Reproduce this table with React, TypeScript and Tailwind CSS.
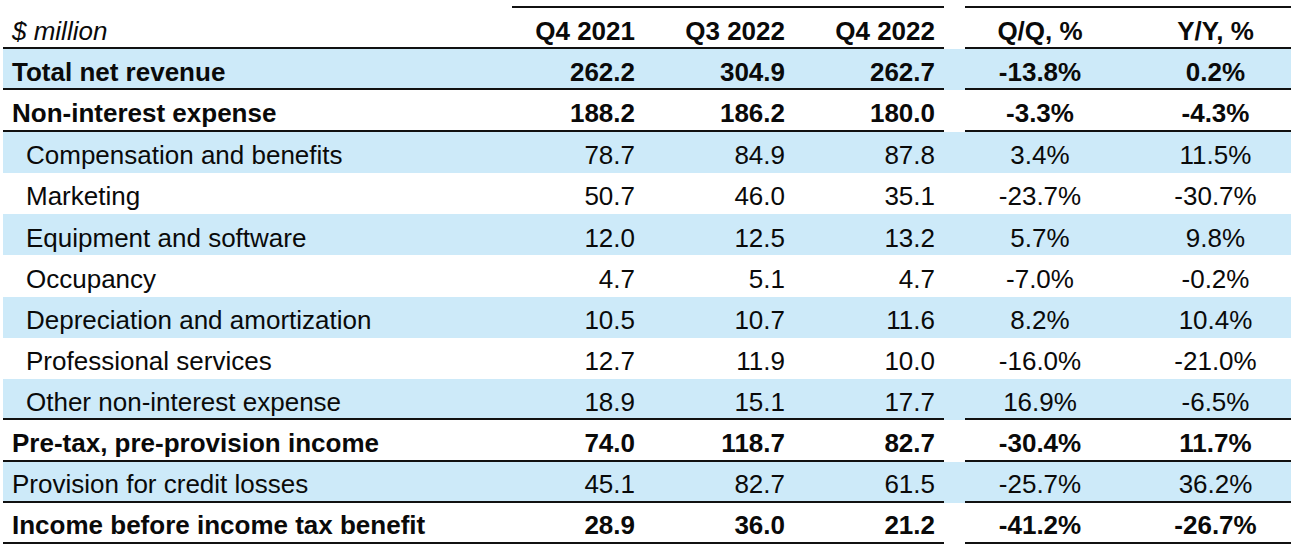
import React from 'react';

interface Row {
  label: string;
  values: string[];
  bold?: boolean;
  indent?: boolean;
  shaded?: boolean;
  line?: boolean;
}

const rows: Row[] = [
  { label: 'Total net revenue', values: ['262.2', '304.9', '262.7', '-13.8%', '0.2%'], bold: true, shaded: true, line: true },
  { label: 'Non-interest expense', values: ['188.2', '186.2', '180.0', '-3.3%', '-4.3%'], bold: true, line: true },
  { label: 'Compensation and benefits', values: ['78.7', '84.9', '87.8', '3.4%', '11.5%'], indent: true, shaded: true },
  { label: 'Marketing', values: ['50.7', '46.0', '35.1', '-23.7%', '-30.7%'], indent: true },
  { label: 'Equipment and software', values: ['12.0', '12.5', '13.2', '5.7%', '9.8%'], indent: true, shaded: true },
  { label: 'Occupancy', values: ['4.7', '5.1', '4.7', '-7.0%', '-0.2%'], indent: true },
  { label: 'Depreciation and amortization', values: ['10.5', '10.7', '11.6', '8.2%', '10.4%'], indent: true, shaded: true },
  { label: 'Professional services', values: ['12.7', '11.9', '10.0', '-16.0%', '-21.0%'], indent: true },
  { label: 'Other non-interest expense', values: ['18.9', '15.1', '17.7', '16.9%', '-6.5%'], indent: true, shaded: true, line: true },
  { label: 'Pre-tax, pre-provision income', values: ['74.0', '118.7', '82.7', '-30.4%', '11.7%'], bold: true, line: true },
  { label: 'Provision for credit losses', values: ['45.1', '82.7', '61.5', '-25.7%', '36.2%'], shaded: true, line: true },
  { label: 'Income before income tax benefit', values: ['28.9', '36.0', '21.2', '-41.2%', '-26.7%'], bold: true, line: true },
];

function DataRow({ row }: { row: Row }) {
  const bg = row.shaded ? 'bg-[#cdeaf9]' : 'bg-white';
  const line = row.line ? 'border-b-2 border-[#111]' : '';
  const weight = row.bold ? 'font-bold' : 'font-normal';
  return (
    <div className={`flex h-[41.25px] ${bg} ${weight}`}>
      <div className={`w-[491px] flex items-center pt-[6px] ${row.indent ? 'pl-[23px]' : 'pl-[9px]'} ${line}`}>
        {row.label}
      </div>
      {row.values.slice(0, 3).map((v, i) => (
        <div key={i} className={`w-[150px] flex items-center justify-end pt-[6px] pr-[9px] ${line}`}>
          {v}
        </div>
      ))}
      <div className="w-[21px]" />
      <div className={`w-[150px] flex items-center justify-center pt-[6px] ${line}`}>{row.values[3]}</div>
      <div className={`w-[176px] flex items-center justify-center pt-[6px] pl-[25px] ${line}`}>{row.values[4]}</div>
    </div>
  );
}

export default function App() {
  return (
    <div className="w-[1292px] h-[548px] bg-white text-[#0a0a0a] text-[26px] leading-none font-['Liberation_Sans',Arial,sans-serif] overflow-hidden">
      <div className="pl-[3px] pt-[6px] w-[1291px]">
        {/* top rule over the period columns */}
        <div className="flex h-[2px]">
          <div className="w-[509px]" />
          <div className="w-[432px] bg-[#111]" />
          <div className="w-[21px]" />
          <div className="w-[326px] bg-[#111]" />
        </div>

        {/* Header */}
        <div className="flex h-[41px] font-bold">
          <div className="w-[491px] flex items-center pt-[6px] pl-[9px] border-b-2 border-[#111] italic font-normal">
            $ million
          </div>
          {['Q4 2021', 'Q3 2022', 'Q4 2022'].map((h) => (
            <div key={h} className="w-[150px] flex items-center justify-end pt-[6px] pr-[9px] border-b-2 border-[#111]">
              {h}
            </div>
          ))}
          <div className="w-[21px]" />
          <div className="w-[150px] flex items-center justify-center pt-[6px] border-b-2 border-[#111]">Q/Q, %</div>
          <div className="w-[176px] flex items-center justify-center pt-[6px] pl-[25px] border-b-2 border-[#111]">Y/Y, %</div>
        </div>

        {rows.map((r) => (
          <DataRow key={r.label} row={r} />
        ))}
      </div>
    </div>
  );
}
